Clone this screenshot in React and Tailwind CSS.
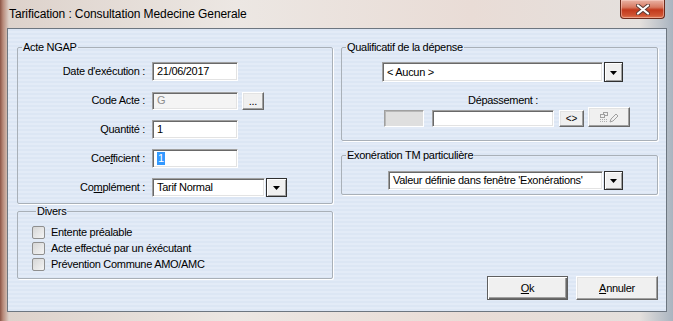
import React from "react";

const RAISED =
  "bg-[#f0f0f0] border border-t-white border-l-white border-b-[#696969] border-r-[#696969] shadow-[inset_-1px_-1px_0_#a0a0a0,inset_1px_1px_0_#e3e3e3]";

function GroupBox({ label, className = "", children }) {
  return (
    <fieldset
      className={`border border-[#a9b0b8] rounded-[2px] shadow-[1px_1px_0_#ffffff] ${className}`}
    >
      <legend className="ml-[4px] px-[1px] leading-[13px]">{label}</legend>
      {children}
    </fieldset>
  );
}

function Edit({ className = "", disabled, children }) {
  return (
    <div
      className={`flex items-center border border-t-[#a0a0a0] border-l-[#a0a0a0] border-b-white border-r-white shadow-[inset_1px_1px_0_#696969,inset_-1px_-1px_0_#e3e3e3] pl-[4px] leading-[13px] whitespace-nowrap overflow-hidden ${
        disabled ? "bg-[#f4f4f4] text-[#8d8d8d]" : "bg-white"
      } ${className}`}
    >
      {children}
    </div>
  );
}

function DropButton({ className = "" }) {
  return (
    <div
      className={`flex items-center justify-center bg-[#f0f0f0] border border-[#303030] shadow-[inset_1px_1px_0_#ffffff,inset_-1px_-1px_0_#a0a0a0] ${className}`}
    >
      <svg width="7" height="4" viewBox="0 0 7 4" className="mt-[1px]">
        <path d="M0 0h7L3.5 4z" fill="#000" />
      </svg>
    </div>
  );
}

function Combo({ value, textClass, btnClass, h }) {
  return (
    <div className="flex items-center gap-[1px]">
      <Edit className={`${textClass} ${h}`}>{value}</Edit>
      <DropButton className={`${btnClass} ${h}`} />
    </div>
  );
}

function Checkbox({ label }) {
  return (
    <div className="flex items-center h-[16px] gap-[6px]">
      <span className="w-[13px] h-[13px] rounded-[2px] border border-[#8f8f8f] bg-[linear-gradient(135deg,#d6d6d6,#f4f4f4)]" />
      <span className="leading-[13px]">{label}</span>
    </div>
  );
}

function Label({ children }) {
  return (
    <div className="flex items-center justify-end h-[19px] leading-[13px] whitespace-nowrap">
      {children}
    </div>
  );
}

function GridIcon() {
  return (
    <svg width="18" height="11" viewBox="0 0 18 11" fill="none">
      <rect x="3.5" y="0.5" width="4" height="3" stroke="#a0a0a0" />
      <rect x="0.5" y="2.5" width="4" height="3" stroke="#a0a0a0" fill="#f0f0f0" />
      <g fill="#b0b0b0">
        <rect x="0" y="7" width="1" height="1" />
        <rect x="2" y="7" width="1" height="1" />
        <rect x="4" y="7" width="1" height="1" />
        <rect x="6" y="7" width="1" height="1" />
        <rect x="0" y="9" width="1" height="1" />
        <rect x="2" y="9" width="1" height="1" />
        <rect x="4" y="9" width="1" height="1" />
        <rect x="6" y="9" width="1" height="1" />
      </g>
      <path d="M10 10l1-3 5-5 2 2-5 5z" stroke="#a0a0a0" strokeWidth="1" fill="#f0f0f0" />
    </svg>
  );
}

function CloseButton() {
  return (
    <div className="flex items-center justify-center w-[45px] h-[19px] mr-[2px] rounded-b-[4px] border border-t-0 border-[#6b2a1c] bg-[linear-gradient(180deg,#eab3a5_0%,#d87a62_40%,#c2391c_55%,#cf5433_85%,#e07a55_100%)] shadow-[inset_0_0_0_1px_rgba(255,220,210,0.45)]">
      <svg width="14" height="11" viewBox="0 0 14 11">
        <path d="M2 1.5l10 8M12 1.5l-10 8" stroke="#5a3b35" strokeWidth="4" strokeLinecap="round" />
        <path d="M2 1.5l10 8M12 1.5l-10 8" stroke="#ffffff" strokeWidth="2.2" strokeLinecap="round" />
      </svg>
    </div>
  );
}

export default function App() {
  return (
    <div className="w-[673px] h-[321px] flex flex-col pl-[7px] pr-[6px] pb-[9px] bg-[linear-gradient(90deg,#8c5546_0px,#b88a7a_3px,#ddd2cb_9px,#ece7e3_35%,#e9dcd6_70%,#e4e0dd_95%,#a9b4c0_100%)] font-['Liberation_Sans',Arial,sans-serif] text-[11px] tracking-[-0.3px] text-black">
      {/* title bar */}
      <div className="flex items-start h-[28px] shrink-0">
        <span className="ml-[2px] mt-[7px] text-[12px] leading-[14px] tracking-[-0.1px]">
          Tarification : Consultation Medecine Generale
        </span>
        <div className="ml-auto">
          <CloseButton />
        </div>
      </div>

      {/* client area */}
      <div className="flex-1 flex gap-[8px] pl-[9px] pr-[8px] border border-[#6d7680] bg-[repeating-linear-gradient(180deg,#dce6f4_0px,#dce6f4_2px,#e3ebf7_2px,#e3ebf7_4px)]">
        {/* left column */}
        <div className="w-[316px] flex flex-col pt-[12px]">
          <GroupBox label="Acte NGAP" className="pt-[8px] pb-[6px]">
            <div className="grid grid-cols-[127px_auto] gap-x-[7px] gap-y-[10px]">
              <Label>Date d'exécution :</Label>
              <Edit className="w-[86px] h-[19px]">21/06/2017</Edit>

              <Label>Code Acte :</Label>
              <div className="flex items-center gap-[4px]">
                <Edit disabled className="w-[86px] h-[18px]">G</Edit>
                <div className={`${RAISED} w-[22px] h-[18px] flex items-center justify-center leading-[10px]`}>
                  ...
                </div>
              </div>

              <Label>Quantité :</Label>
              <Edit className="w-[86px] h-[19px]">1</Edit>

              <Label>
                <span>
                  Coe<span className="underline">f</span>ficient :
                </span>
              </Label>
              <Edit className="w-[86px] h-[19px]">
                <span className="bg-[#3399ff] text-white px-[1px]">1</span>
              </Edit>

              <Label>
                <span>
                  Co<span className="underline">m</span>plément :
                </span>
              </Label>
              <Combo
                value="Tarif Normal"
                textClass="w-[113px]"
                btnClass="w-[21px]"
                h="h-[19px]"
              />
            </div>
          </GroupBox>

          <GroupBox label="Divers" className="mt-[1px] pt-[6px] pb-[6px] pl-[14px]">
            <Checkbox label="Entente préalable" />
            <Checkbox label="Acte effectué par un éxécutant" />
            <Checkbox label="Prévention Commune AMO/AMC" />
          </GroupBox>
        </div>

        {/* right column */}
        <div className="w-[317px] flex flex-col pt-[12px] pb-[11px]">
          <GroupBox label="Qualificatif de la dépense" className="pt-[8px] pb-[13px]">
            <div className="ml-[40px]">
              <Combo
                value="< Aucun >"
                textClass="w-[221px]"
                btnClass="w-[19px]"
                h="h-[20px]"
              />
            </div>
            <div className="ml-[126px] mt-[12px] leading-[13px]">Dépassement :</div>
            <div className="flex items-end ml-[42px]">
              <div className="w-[40px] h-[17px] bg-[#dfdfdf] border border-[#a0a0a0] border-b-white border-r-white shadow-[inset_1px_1px_0_#b8b8b8]" />
              <Edit className="ml-[8px] w-[122px] h-[17px]" />
              <div className={`${RAISED} ml-[5px] w-[25px] h-[17px] flex items-center justify-center leading-[11px] text-[10px] tracking-[0px]`}>
                &lt;&gt;
              </div>
              <div className={`${RAISED} ml-[4px] w-[42px] h-[20px] flex items-center justify-center`}>
                <GridIcon />
              </div>
            </div>
          </GroupBox>

          <GroupBox label="Exonération TM particulière" className="mt-[8px] pt-[9px] pb-[4px]">
            <div className="ml-[46px]">
              <Combo
                value="Valeur définie dans fenêtre 'Exonérations'"
                textClass="w-[215px]"
                btnClass="w-[19px]"
                h="h-[19px]"
              />
            </div>
          </GroupBox>

          <div className="mt-auto flex justify-end gap-[8px]">
            <div className="w-[81px] h-[24px] flex items-center justify-center bg-[#f0f0f0] border border-[#5f5f5f] shadow-[inset_1px_1px_0_#ffffff,inset_-1px_-1px_0_#696969,inset_-2px_-2px_0_#a0a0a0]">
              <span>
                <span className="underline">O</span>k
              </span>
            </div>
            <div className={`${RAISED} w-[82px] h-[24px] flex items-center justify-center`}>
              <span>
                <span className="underline">A</span>nnuler
              </span>
            </div>
          </div>
        </div>
      </div>
    </div>
  );
}
